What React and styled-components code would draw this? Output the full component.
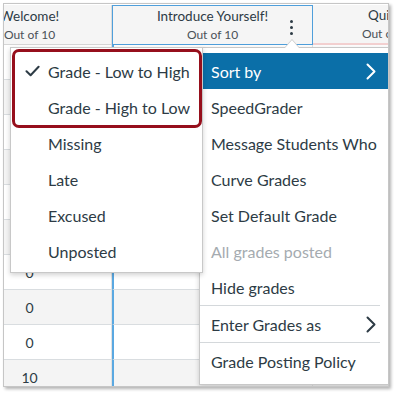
import React from 'react';
import styled, { createGlobalStyle } from 'styled-components';

const GlobalStyle = createGlobalStyle`
  html, body {
    margin: 0;
    padding: 0;
    background: #fff;
  }
  body {
    font-family: Lato, "Open Sans", "Liberation Sans", sans-serif;
    color: #2d3b45;
  }
`;

const rows = ['10', '8', '0', '10', '9', '10', '0', '0', '0', '10'];

const sortItems = [
  { label: 'Grade - Low to High', checked: true },
  { label: 'Grade - High to Low' },
  { label: 'Missing' },
  { label: 'Late' },
  { label: 'Excused' },
  { label: 'Unposted' },
];

const menuItems = [
  { label: 'Sort by', arrow: true, active: true },
  { label: 'SpeedGrader' },
  { label: 'Message Students Who' },
  { label: 'Curve Grades' },
  { label: 'Set Default Grade' },
  { label: 'All grades posted', disabled: true },
  { label: 'Hide grades', divider: true },
  { label: 'Enter Grades as', arrow: true, divider: true },
  { label: 'Grade Posting Policy' },
];

function CheckIcon() {
  return (
    <svg width="15" height="12" viewBox="0 0 15 12">
      <path d="M1.5 6.2 L5.6 10.2 L13.6 1.8" fill="none" stroke="#2d3b45" strokeWidth="2" strokeLinecap="round" strokeLinejoin="round" />
    </svg>
  );
}

function Chevron({ color }) {
  return (
    <svg width="10" height="17" viewBox="0 0 10 17">
      <path d="M1.5 1.5 L8.5 8.5 L1.5 15.5" fill="none" stroke={color} strokeWidth="2" strokeLinecap="round" strokeLinejoin="round" />
    </svg>
  );
}

export default function App() {
  return (
    <>
      <GlobalStyle />
      <Page>
        <Window>
          <Grid>
            <HeaderRow>
              <HeadCell $w={164}>
                <HeadTitle>Welcome!</HeadTitle>
                <HeadSub>Out of 10</HeadSub>
              </HeadCell>
              <HeadCell $w={201} $selected>
                <HeadTitle>Introduce Yourself!</HeadTitle>
                <HeadSub>Out of 10</HeadSub>
                <Kebab>
                  <Dot />
                  <Dot />
                  <Dot />
                </Kebab>
              </HeadCell>
              <HeadCell $w={150} $flag>
                <HeadTitle>Quiz 1</HeadTitle>
                <HeadSub>Out of 10</HeadSub>
              </HeadCell>
            </HeaderRow>
            {rows.map((score, i) => (
              <Row key={i} $odd={i % 2 === 1}>
                <Cell $w={164}>{score}</Cell>
                <Cell $w={201} $selected />
                <Cell $w={150} />
              </Row>
            ))}
          </Grid>

          <MainMenu>
            {menuItems.map((item) => (
              <React.Fragment key={item.label}>
                <MenuItem $active={item.active} $disabled={item.disabled}>
                  <span>{item.label}</span>
                  {item.arrow && <Chevron color={item.active ? '#fff' : '#2d3b45'} />}
                </MenuItem>
                {item.divider && <Divider />}
              </React.Fragment>
            ))}
          </MainMenu>
          <Caret />

          <SubMenu>
            {sortItems.map((item) => (
              <SubItem key={item.label}>
                <CheckSlot>{item.checked && <CheckIcon />}</CheckSlot>
                {item.label}
              </SubItem>
            ))}
          </SubMenu>
          <Highlight />
        </Window>
      </Page>
    </>
  );
}

const Page = styled.div`
  width: 395px;
  height: 394px;
  box-sizing: border-box;
  padding: 3px 6px 7px 3px;
`;

const Window = styled.div`
  position: relative;
  height: 100%;
  box-sizing: border-box;
  border: 1px solid #c6c6c6;
  padding: 1px;
  background: #fff;
  overflow: hidden;
  box-shadow: 2px 2px 3px rgba(0, 0, 0, 0.3);
`;

/* scrolled a little to the right, so the first column is cut */
const Grid = styled.div`
  margin-left: -57px;
  width: 520px;
`;

const HeaderRow = styled.div`
  display: flex;
  height: 40px;
  background: #f5f5f5;
`;

const HeadCell = styled.div`
  position: relative;
  flex: 0 0 ${(p) => p.$w}px;
  box-sizing: border-box;
  display: flex;
  flex-direction: column;
  align-items: center;
  justify-content: center;
  gap: 2px;
  border-right: 1px solid #dcdcdc;
  border-bottom: ${(p) => (p.$flag ? '2px solid #f3d0d0' : '1px solid #d6d6d6')};
  ${(p) => p.$selected && 'border: 1px solid #4f9fdb;'}
`;

const HeadTitle = styled.div`
  font-size: 13.5px;
  color: #2d3b45;
  line-height: 17px;
  white-space: nowrap;
`;

const HeadSub = styled.div`
  font-size: 12px;
  color: #4a5157;
  line-height: 15px;
  white-space: nowrap;
`;

const Kebab = styled.div`
  position: absolute;
  right: 19px;
  top: 14px;
  display: flex;
  flex-direction: column;
  gap: 3px;
`;

const Dot = styled.span`
  width: 3px;
  height: 3px;
  border-radius: 50%;
  background: #2d3b45;
`;

const Row = styled.div`
  display: flex;
  height: 35px;
  background: ${(p) => (p.$odd ? '#f4f4f4' : '#fff')};
`;

const Cell = styled.div`
  flex: 0 0 ${(p) => p.$w}px;
  box-sizing: border-box;
  display: flex;
  align-items: center;
  justify-content: center;
  font-size: 14px;
  color: #2d3b45;
  border-bottom: 1px solid #d9dde0;
  border-right: 1px solid #e2e2e2;
  ${(p) => p.$selected && 'border-left: 2px solid #5aa8e1;'}
`;

const MainMenu = styled.div`
  position: absolute;
  left: 195px;
  top: 43px;
  width: 194px;
  box-sizing: border-box;
  padding: 5px 0 5px;
  background: #fff;
  border: 1px solid #c8c8c8;
  box-shadow: 0 2px 5px rgba(0, 0, 0, 0.18);
  z-index: 2;
`;

const MenuItem = styled.div`
  height: 36px;
  display: flex;
  align-items: center;
  justify-content: space-between;
  padding: 0 16px 0 11px;
  font-size: 16px;
  white-space: nowrap;
  color: ${(p) => (p.$active ? '#fff' : p.$disabled ? '#a5abb0' : '#2d3b45')};
  background: ${(p) => (p.$active ? '#0b6fa8' : 'transparent')};
`;

const Divider = styled.div`
  height: 1px;
  background: #d4d8db;
  margin-right: 12px;
`;

const Caret = styled.div`
  position: absolute;
  left: 281px;
  top: 36px;
  width: 0;
  height: 0;
  border-left: 7px solid transparent;
  border-right: 7px solid transparent;
  border-bottom: 8px solid #fff;
  filter: drop-shadow(0 -1px 0 #c8c8c8);
  z-index: 3;
`;

const SubMenu = styled.div`
  position: absolute;
  left: 6px;
  top: 43px;
  width: 193px;
  box-sizing: border-box;
  padding: 5px 0 3px;
  background: #fff;
  border: 1px solid #c8c8c8;
  box-shadow: 0 2px 5px rgba(0, 0, 0, 0.18);
  z-index: 4;
`;

const SubItem = styled.div`
  height: 36px;
  display: flex;
  align-items: center;
  padding-left: 14px;
  font-size: 16px;
  white-space: nowrap;
  color: #2d3b45;
`;

const CheckSlot = styled.span`
  width: 23px;
  display: flex;
  align-items: center;
`;

const Highlight = styled.div`
  position: absolute;
  left: 8px;
  top: 45px;
  width: 190px;
  height: 79px;
  box-sizing: border-box;
  border: 3px solid #960f1c;
  border-radius: 7px;
  z-index: 5;
  pointer-events: none;
`;
